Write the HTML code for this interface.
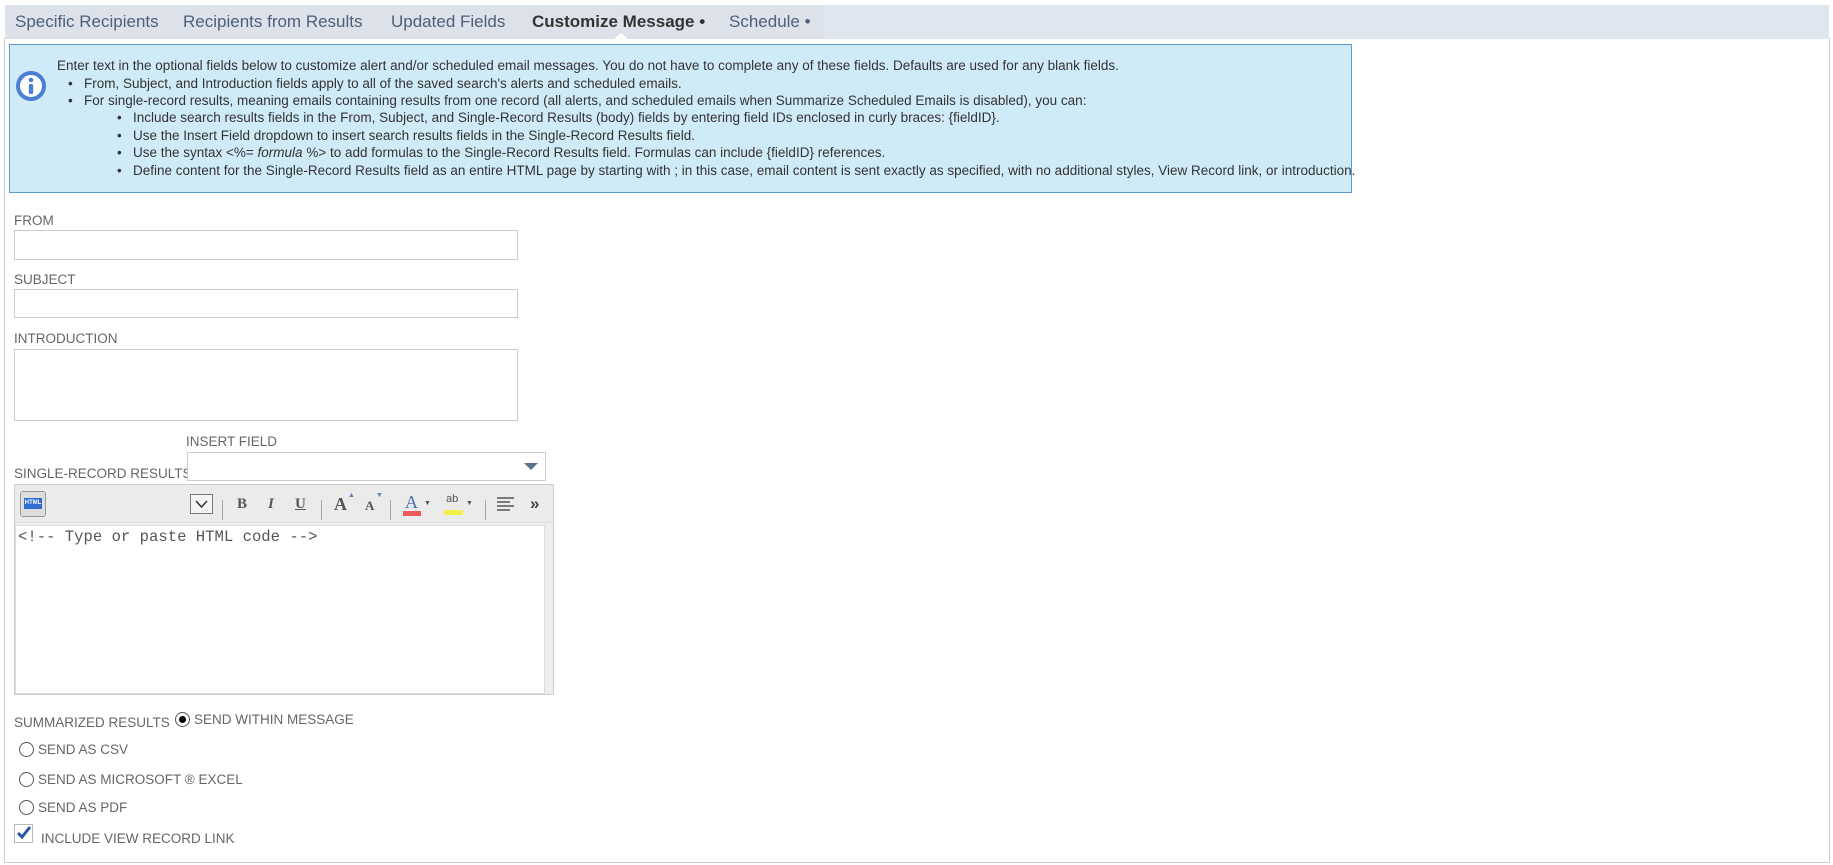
<!DOCTYPE html>
<html><head><meta charset="utf-8"><style>
*{box-sizing:border-box}
body{margin:0;width:1833px;height:865px;background:#fff;font-family:"Liberation Sans",sans-serif;position:relative;overflow:hidden;color:#666}
.a{position:absolute}
.tabbar{left:5px;top:5px;width:1824px;height:34px;background:#e0e6ef}
.tabs{left:5px;top:5px;width:819px;height:34px;background:#dde2ea}
.tab{top:12px;font-size:17px;color:#4d5f79;white-space:nowrap}
.frame{left:4px;top:38px;width:1826px;height:825px;border:1px solid #ccc;border-top:none}
.info{left:9px;top:44px;width:1343px;height:149px;background:#d0ebf8;border:1px solid #5b9bd5}
.it{font-size:13.5px;color:#333;white-space:nowrap;transform-origin:0 50%}
.lbl{font-size:13.5px;color:#666;white-space:nowrap}
.inp{border:1px solid #ccc;background:#fff}
.radio{width:15px;height:15px;border:1px solid #555;border-radius:50%;background:#fff}
.tb{font-family:"Liberation Serif",serif;font-weight:bold;font-size:15px;color:#555}
.sep{width:1px;height:20px;background:#aaa;top:500px}
</style></head><body>
<div class="a tabbar"></div>
<div class="a tabs"></div>
<div class="a tab" style="left:15px">Specific Recipients</div>
<div class="a tab" style="left:183px">Recipients from Results</div>
<div class="a tab" style="left:391px">Updated Fields</div>
<div class="a tab" style="left:532px;font-weight:bold;color:#333">Customize Message •</div>
<div class="a tab" style="left:729px">Schedule •</div>
<div class="a" style="left:614px;top:33px;width:0;height:0;border-left:7px solid transparent;border-right:7px solid transparent;border-bottom:6px solid #fff"></div>
<div class="a frame"></div>
<div class="a info"></div>
<svg class="a" style="left:16px;top:71px" width="30" height="30" viewBox="0 0 30 30"><circle cx="15" cy="15" r="13" fill="#fff" stroke="#4a7fd4" stroke-width="4"/><circle cx="15" cy="9" r="2.3" fill="#4a7fd4"/><rect x="12.8" y="13" width="4.4" height="10" rx="1.5" fill="#4a7fd4"/></svg>
<div class="a it" style="left:57px;top:58px">Enter text in the optional fields below to customize alert and/or scheduled email messages. You do not have to complete any of these fields. Defaults are used for any blank fields.</div>
<div class="a it" style="left:68px;top:76px">•&nbsp;&nbsp;&nbsp;From, Subject, and Introduction fields apply to all of the saved search's alerts and scheduled emails.</div>
<div class="a it" style="left:68px;top:93px">•&nbsp;&nbsp;&nbsp;For single-record results, meaning emails containing results from one record (all alerts, and scheduled emails when Summarize Scheduled Emails is disabled), you can:</div>
<div class="a it" style="left:117px;top:110px">•&nbsp;&nbsp;&nbsp;Include search results fields in the From, Subject, and Single-Record Results (body) fields by entering field IDs enclosed in curly braces: {fieldID}.</div>
<div class="a it" style="left:117px;top:128px">•&nbsp;&nbsp;&nbsp;Use the Insert Field dropdown to insert search results fields in the Single-Record Results field.</div>
<div class="a it" style="left:117px;top:145px">•&nbsp;&nbsp;&nbsp;Use the syntax &lt;%= <i>formula</i> %&gt; to add formulas to the Single-Record Results field. Formulas can include {fieldID} references.</div>
<div class="a it" style="left:117px;top:163px">•&nbsp;&nbsp;&nbsp;Define content for the Single-Record Results field as an entire HTML page by starting with ; in this case, email content is sent exactly as specified, with no additional styles, View Record link, or introduction.</div>

<div class="a lbl" style="left:14px;top:213px">FROM</div>
<div class="a inp" style="left:14px;top:230px;width:504px;height:30px"></div>
<div class="a lbl" style="left:14px;top:272px">SUBJECT</div>
<div class="a inp" style="left:14px;top:289px;width:504px;height:29px"></div>
<div class="a lbl" style="left:14px;top:331px">INTRODUCTION</div>
<div class="a inp" style="left:14px;top:349px;width:504px;height:72px"></div>
<div class="a lbl" style="left:186px;top:434px">INSERT FIELD</div>
<div class="a lbl" style="left:14px;top:466px">SINGLE-RECORD RESULTS</div>
<div class="a inp" style="left:187px;top:452px;width:359px;height:29px"></div>
<div class="a" style="left:524px;top:463px;width:0;height:0;border-left:7px solid transparent;border-right:7px solid transparent;border-top:7px solid #5a7191"></div>

<div class="a" style="left:14px;top:484px;width:540px;height:211px;border:1px solid #ccc;background:#eee"></div>
<div class="a" style="left:15px;top:485px;width:538px;height:38px;background:#ebebeb;border-bottom:1px solid #ddd"></div>
<div class="a" style="left:20px;top:491px;width:26px;height:26px;border:1px solid #999;border-radius:3px;background:#ddd"></div>
<div class="a" style="left:24px;top:498px;width:18px;height:11px;background:#2f6bd0;color:#fff;font-size:6px;font-weight:bold;text-align:center;line-height:11px">HTML</div>
<div class="a" style="left:190px;top:494px;width:23px;height:20px;border:1px solid #777;background:#f5f5f5"></div>
<svg class="a" style="left:195px;top:499px" width="13" height="10"><path d="M1 2 L6.5 8 L12 2" fill="none" stroke="#333" stroke-width="1.5"/></svg>
<div class="a sep" style="left:222px"></div>
<div class="a tb" style="left:237px;top:496px">B</div>
<div class="a tb" style="left:268px;top:496px;font-style:italic">I</div>
<div class="a tb" style="left:295px;top:496px;text-decoration:underline">U</div>
<div class="a sep" style="left:321px"></div>
<div class="a tb" style="left:334px;top:494px;font-size:18px">A</div>
<div class="a" style="left:348px;top:492px;font-size:7px;color:#5a7fb0">▲</div>
<div class="a tb" style="left:365px;top:498px;font-size:13px">A</div>
<div class="a" style="left:376px;top:492px;font-size:7px;color:#5a7fb0">▼</div>
<div class="a sep" style="left:390px"></div>
<div class="a tb" style="left:405px;top:492px;font-size:18px;color:#4a6fb0;font-weight:normal">A</div>
<div class="a" style="left:403px;top:511px;width:18px;height:5px;background:#f05a5a"></div>
<div class="a" style="left:424px;top:500px;font-size:7px;color:#555">▼</div>
<div class="a" style="left:446px;top:493px;font-size:11px;color:#555">ab</div>
<div class="a" style="left:444px;top:510px;width:19px;height:5px;background:#f4f04a"></div>
<div class="a" style="left:466px;top:500px;font-size:7px;color:#555">▼</div>
<div class="a sep" style="left:485px"></div>
<svg class="a" style="left:497px;top:497px" width="18" height="14"><path d="M0 1H17M0 5H13M0 9H17M0 13H13" stroke="#555" stroke-width="1.6"/></svg>
<div class="a" style="left:530px;top:494px;font-size:17px;font-weight:bold;color:#444">»</div>
<div class="a" style="left:15px;top:525px;width:530px;height:169px;background:#fff;border:1px solid #ddd"></div>
<div class="a" style="left:18px;top:528px;font-family:'Liberation Mono',monospace;font-size:15.6px;color:#555">&lt;!-- Type or paste HTML code --&gt;</div>

<div class="a lbl" style="left:14px;top:715px">SUMMARIZED RESULTS</div>
<div class="a radio" style="left:175px;top:712px"></div>
<div class="a" style="left:179px;top:716px;width:7px;height:7px;border-radius:50%;background:#000"></div>
<div class="a lbl" style="left:194px;top:712px">SEND WITHIN MESSAGE</div>
<div class="a radio" style="left:19px;top:742px"></div>
<div class="a lbl" style="left:38px;top:742px">SEND AS CSV</div>
<div class="a radio" style="left:19px;top:772px"></div>
<div class="a lbl" style="left:38px;top:772px">SEND AS MICROSOFT ® EXCEL</div>
<div class="a radio" style="left:19px;top:800px"></div>
<div class="a lbl" style="left:38px;top:800px">SEND AS PDF</div>
<div class="a" style="left:14px;top:824px;width:19px;height:19px;border:1px solid #bbb;background:#fff"></div>
<svg class="a" style="left:16px;top:825px" width="16" height="15"><path d="M2 8 L6 12 L14 2" fill="none" stroke="#2456a4" stroke-width="3"/></svg>
<div class="a lbl" style="left:41px;top:831px">INCLUDE VIEW RECORD LINK</div>
</body></html>
